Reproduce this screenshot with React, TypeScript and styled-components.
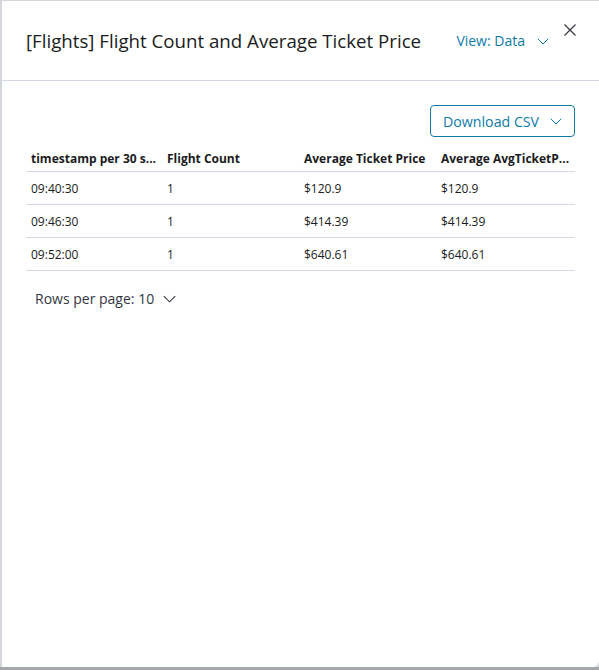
import React from "react";
import styled, { createGlobalStyle } from "styled-components";

const Global = createGlobalStyle`
  html, body { margin: 0; padding: 0; }
  body { font-family: "Open Sans", "Noto Sans", sans-serif; color: #1a1c21; }
  * { box-sizing: border-box; }
`;

const Page = styled.div`
  width: 599px;
  height: 670px;
  background: #d3d6da;
  padding: 1px 0 0 2px;
  border-bottom: 3px solid #a4a7ac;
  display: flex;
`;

const Panel = styled.div`
  flex: 1;
  background: #fff;
  border-radius: 0 0 6px 0;
  display: flex;
  flex-direction: column;
  position: relative;
`;

const Header = styled.div`
  height: 80px;
  border-bottom: 1px solid #d3dae6;
  display: flex;
  align-items: center;
  padding: 0 50px 0 24px;
  gap: 16px;
`;

const Title = styled.h2`
  margin: 0;
  flex: 1;
  font-size: 18.7px;
  font-weight: 400;
  color: #1a1c21;
  white-space: nowrap;
`;

const ViewLink = styled.button`
  border: 0;
  background: none;
  padding: 0;
  display: flex;
  align-items: center;
  gap: 12px;
  font-family: inherit;
  font-size: 14px;
  color: #0f7aa8;
  cursor: pointer;
`;

const CloseButton = styled.button`
  position: absolute;
  top: 23px;
  right: 23px;
  width: 12px;
  height: 12px;
  border: 0;
  background: none;
  padding: 0;
  display: flex;
  color: #343741;
`;

const Body = styled.div`
  padding: 24px 24px 0 24px;
  display: flex;
  flex-direction: column;
`;

const Toolbar = styled.div`
  display: flex;
  justify-content: flex-end;
`;

const DownloadButton = styled.button`
  height: 32px;
  width: 145px;
  padding: 0 12px;
  border: 1px solid #0f7aa8;
  border-radius: 4px;
  background: #fff;
  color: #0f7aa8;
  font-family: inherit;
  font-size: 14.2px;
  display: flex;
  align-items: center;
  justify-content: space-between;
`;

const Table = styled.table`
  width: 100%;
  border-collapse: collapse;
  table-layout: fixed;
  margin-top: 6px;
  font-size: 12px;
`;

const Col = styled.col<{ $w?: number }>`
  width: ${(p) => (p.$w ? `${p.$w}px` : "auto")};
`;

const Th = styled.th`
  text-align: left;
  font-weight: 700;
  height: 28px;
  vertical-align: bottom;
  padding: 0 2px 4px 5px;
  border-bottom: 1px solid #d3dae6;
  white-space: nowrap;
`;

const Td = styled.td`
  height: 33px;
  padding: 1px 5px 0 5px;
  border-bottom: 1px solid #d3dae6;
  white-space: nowrap;
`;

const RowsPerPage = styled.button`
  align-self: flex-start;
  margin-top: 16px;
  margin-left: 9px;
  border: 0;
  background: none;
  padding: 0;
  display: flex;
  align-items: center;
  gap: 9px;
  font-family: inherit;
  font-size: 14px;
  color: #343741;
  height: 24px;
`;

const Chevron = ({ size = 12 }: { size?: number }) => (
  <svg width={size} height={size} viewBox="0 0 16 16" fill="none">
    <path d="M1 5l7 7 7-7" stroke="currentColor" strokeWidth="1.3" />
  </svg>
);

const rows = [
  ["09:40:30", "1", "$120.9", "$120.9"],
  ["09:46:30", "1", "$414.39", "$414.39"],
  ["09:52:00", "1", "$640.61", "$640.61"],
];

export default function App() {
  return (
    <>
      <Global />
      <Page>
        <Panel>
          <Header>
            <Title>[Flights] Flight Count and Average Ticket Price</Title>
            <ViewLink>
              View: Data <Chevron />
            </ViewLink>
          </Header>
          <CloseButton aria-label="close">
            <svg width="12" height="12" viewBox="0 0 12 12">
              <path d="M0.5 0.5l11 11M11.5 0.5l-11 11" stroke="currentColor" strokeWidth="1.2" />
            </svg>
          </CloseButton>
          <Body>
            <Toolbar>
              <DownloadButton>
                Download CSV <Chevron />
              </DownloadButton>
            </Toolbar>
            <Table>
              <colgroup>
                <Col $w={136} />
                <Col $w={137} />
                <Col $w={137} />
                <Col />
              </colgroup>
              <thead>
                <tr>
                  <Th title="timestamp per 30 seconds">timestamp per 30 s...</Th>
                  <Th>Flight Count</Th>
                  <Th>Average Ticket Price</Th>
                  <Th title="Average AvgTicketPrice">Average AvgTicketP...</Th>
                </tr>
              </thead>
              <tbody>
                {rows.map((r) => (
                  <tr key={r[0]}>
                    {r.map((c, i) => (
                      <Td key={i}>{c}</Td>
                    ))}
                  </tr>
                ))}
              </tbody>
            </Table>
            <RowsPerPage>
              Rows per page: 10 <Chevron size={13} />
            </RowsPerPage>
          </Body>
        </Panel>
      </Page>
    </>
  );
}
